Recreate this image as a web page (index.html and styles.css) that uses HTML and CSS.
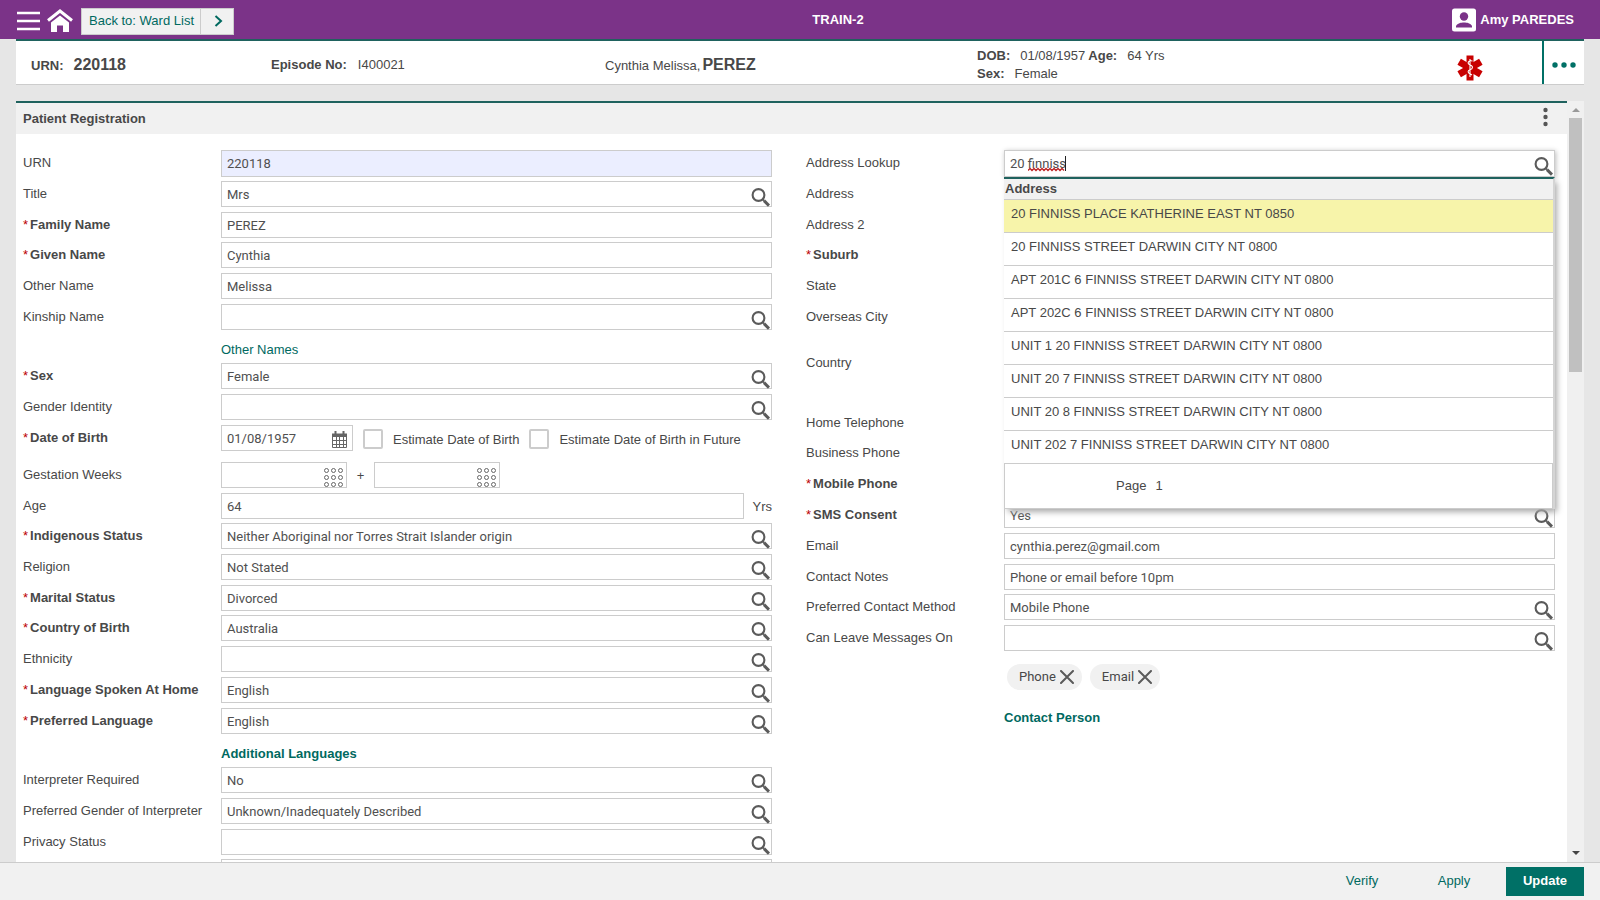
FILE: index.html
```html
<!DOCTYPE html>
<html lang="en">
<head>
<meta charset="utf-8">
<title>Patient Registration</title>
<link rel="stylesheet" href="styles.css">
</head>
<body>
<svg class="defs" aria-hidden="true">
  <symbol id="search" viewBox="0 0 19 19"><circle cx="7.5" cy="7" r="5.9" fill="none" stroke="#5b5b5b" stroke-width="2.1"/><path d="M11.6 11.2L13 12.6" stroke="#5b5b5b" stroke-width="2"/><path d="M13 12.6L18 17.6" stroke="#5b5b5b" stroke-width="3"/></symbol>
  <symbol id="keypad" viewBox="0 0 19 19"><g fill="none" stroke="#666" stroke-width="1"><circle cx="2.5" cy="2.5" r="2"/><circle cx="9.5" cy="2.5" r="2"/><circle cx="16.5" cy="2.5" r="2"/><circle cx="2.5" cy="9.5" r="2"/><circle cx="9.5" cy="9.5" r="2"/><circle cx="16.5" cy="9.5" r="2"/><circle cx="2.5" cy="16.5" r="2"/><circle cx="9.5" cy="16.5" r="2"/><circle cx="16.5" cy="16.5" r="2"/></g></symbol>
  <symbol id="close" viewBox="0 0 14 14"><path d="M1 1L13 13M13 1L1 13" stroke="#5b5b5b" stroke-width="2" stroke-linecap="round"/></symbol>
</svg>

<header class="topbar">
  <div class="topbar-left">
    <button class="icon-btn" aria-label="Menu"><svg width="24" height="20" viewBox="0 0 24 20"><path d="M1 2H24M1 10H24M1 18H24" stroke="#fff" stroke-width="2.4"/></svg></button>
    <button class="icon-btn" aria-label="Home"><svg width="26" height="24" viewBox="0 0 26 24"><path d="M1 11.5L13 2L25 11.5" fill="none" stroke="#fff" stroke-width="3"/><path d="M4 13.5L13 6.5L22 13.5V23H16V16.500H10V23H4Z" fill="#fff"/></svg></button>
    <div class="back">
      <button class="back-text">Back to: Ward List</button>
      <button class="back-next" aria-label="Next"><svg width="9" height="12" viewBox="0 0 9 12"><path d="M1.500 1L7 6L1.500 11" fill="none" stroke="#00695f" stroke-width="2"/></svg></button>
    </div>
  </div>
  <div class="site">TRAIN-2</div>
  <button class="user"><svg width="24" height="24" viewBox="0 0 24 24"><rect width="24" height="23" y="0.500" rx="2.500" fill="#fff"/><circle cx="12" cy="8.500" r="4.200" fill="#7b3388"/><path d="M4 19.500V18C5.500 15 9 14.400 12 14.400S18.500 15 20 18V19.500Z" fill="#7b3388"/></svg>Amy PAREDES</button>
</header>

<section class="banner">
  <div class="b-urn"><b>URN:</b><strong class="big">220118</strong></div>
  <div class="b-episode"><b>Episode No:</b><span>I400021</span></div>
  <div class="b-name"><span>Cynthia Melissa,</span><strong class="big">PEREZ</strong></div>
  <div class="b-dob">
    <div class="pairs"><b>DOB:</b><span>01/08/1957</span><b class="age">Age:</b><span>64 Yrs</span></div>
    <div class="pairs"><b>Sex:</b><span>Female</span></div>
  </div>
  <div class="b-alert"><svg width="26" height="26" viewBox="0 0 26 26"><g fill="#c80000"><path id="arm" d="M9.500 0.500H16.500V25.500H9.500Z"/><use href="#arm" transform="rotate(60 13 13)"/><use href="#arm" transform="rotate(120 13 13)"/></g><path d="M13 4V22M15.500 6C10.500 5 10 9 13 10C16.500 11 16 14 13 14.800C10.500 15.500 10.500 18 13 18.800L15 20" fill="none" stroke="#fff" stroke-width="1.100"/></svg></div>
  <button class="more" aria-label="More"><svg width="24" height="6" viewBox="0 0 24 6"><g fill="#007066"><circle cx="3" cy="3" r="2.700"/><circle cx="12" cy="3" r="2.700"/><circle cx="21" cy="3" r="2.700"/></g></svg></button>
</section>

<main class="work">
  <section class="panel">
    <div class="panel-head">
      <h1>Patient Registration</h1>
      <button class="options" aria-label="Options"><svg width="5" height="20" viewBox="0 0 5 20"><g fill="#555"><circle cx="2.500" cy="3" r="2.200"/><circle cx="2.500" cy="10" r="2.200"/><circle cx="2.500" cy="17" r="2.200"/></g></svg></button>
    </div>
    <form class="columns">
      <div class="column">
        <div class="row"><label for="urn">URN</label><div class="field"><input class="readonly" id="urn" value="220118" readonly></div></div>
        <div class="row"><label for="title">Title</label><div class="field"><input id="title" value="Mrs"><button type="button" class="find" aria-label="Search"><svg><use href="#search"/></svg></button></div></div>
        <div class="row tight"><label class="req" for="family">Family Name</label><div class="field"><input id="family" value="PEREZ"></div></div>
        <div class="row"><label class="req" for="given">Given Name</label><div class="field"><input id="given" value="Cynthia"></div></div>
        <div class="row"><label for="other">Other Name</label><div class="field"><input id="other" value="Melissa"></div></div>
        <div class="row"><label for="kin">Kinship Name</label><div class="field"><input id="kin"><button type="button" class="find" aria-label="Search"><svg><use href="#search"/></svg></button></div></div>
        <div class="link-row"><a href="#">Other Names</a></div>
        <div class="row"><label class="req" for="sex">Sex</label><div class="field"><input id="sex" value="Female"><button type="button" class="find" aria-label="Search"><svg><use href="#search"/></svg></button></div></div>
        <div class="row"><label for="gender">Gender Identity</label><div class="field"><input id="gender"><button type="button" class="find" aria-label="Search"><svg><use href="#search"/></svg></button></div></div>
        <div class="row birth-row"><label class="req" for="dob">Date of Birth</label>
          <div class="inline">
            <div class="field date"><input id="dob" value="01/08/1957"><button type="button" class="find calendar" aria-label="Calendar"><svg viewBox="0 0 17 18"><path d="M1 2.500H16V6H1Z" fill="#666"/><path d="M4.500 0V3M12.500 0V3" stroke="#666" stroke-width="2"/><path d="M1.500 6V16.500H15.500V6M1 9.500H16M1 13.500H16M5.500 6V17M8.500 6V17M12.500 6V17" fill="none" stroke="#666"/></svg></button></div>
            <label class="check"><input type="checkbox">Estimate Date of Birth</label>
            <label class="check"><input type="checkbox">Estimate Date of Birth in Future</label>
          </div>
        </div>
        <div class="row"><label for="weeks">Gestation Weeks</label>
          <div class="inline">
            <div class="field number"><input id="weeks"><button type="button" class="find keypad" aria-label="Keypad"><svg><use href="#keypad"/></svg></button></div>
            <span class="plus">+</span>
            <div class="field number"><input aria-label="Gestation Days"><button type="button" class="find keypad" aria-label="Keypad"><svg><use href="#keypad"/></svg></button></div>
          </div>
        </div>
        <div class="row tight"><label for="age">Age</label><div class="inline"><div class="field"><input id="age" value="64"></div><span class="unit">Yrs</span></div></div>
        <div class="row"><label class="req" for="indig">Indigenous Status</label><div class="field"><input id="indig" value="Neither Aboriginal nor Torres Strait Islander origin"><button type="button" class="find" aria-label="Search"><svg><use href="#search"/></svg></button></div></div>
        <div class="row"><label for="religion">Religion</label><div class="field"><input id="religion" value="Not Stated"><button type="button" class="find" aria-label="Search"><svg><use href="#search"/></svg></button></div></div>
        <div class="row tight"><label class="req" for="marital">Marital Status</label><div class="field"><input id="marital" value="Divorced"><button type="button" class="find" aria-label="Search"><svg><use href="#search"/></svg></button></div></div>
        <div class="row"><label class="req" for="cob">Country of Birth</label><div class="field"><input id="cob" value="Australia"><button type="button" class="find" aria-label="Search"><svg><use href="#search"/></svg></button></div></div>
        <div class="row"><label for="eth">Ethnicity</label><div class="field"><input id="eth"><button type="button" class="find" aria-label="Search"><svg><use href="#search"/></svg></button></div></div>
        <div class="row"><label class="req" for="homelang">Language Spoken At Home</label><div class="field"><input id="homelang" value="English"><button type="button" class="find" aria-label="Search"><svg><use href="#search"/></svg></button></div></div>
        <div class="row"><label class="req" for="lang">Preferred Language</label><div class="field"><input id="lang" value="English"><button type="button" class="find" aria-label="Search"><svg><use href="#search"/></svg></button></div></div>
        <div class="link-row"><a class="strong" href="#">Additional Languages</a></div>
        <div class="row"><label for="interp">Interpreter Required</label><div class="field"><input id="interp" value="No"><button type="button" class="find" aria-label="Search"><svg><use href="#search"/></svg></button></div></div>
        <div class="row"><label for="pgi">Preferred Gender of Interpreter</label><div class="field"><input id="pgi" value="Unknown/Inadequately Described"><button type="button" class="find" aria-label="Search"><svg><use href="#search"/></svg></button></div></div>
        <div class="row tight"><label for="privacy">Privacy Status</label><div class="field"><input id="privacy"><button type="button" class="find" aria-label="Search"><svg><use href="#search"/></svg></button></div></div>
        <div class="row"><span></span><div class="field"><input aria-label="Next field"></div></div>
      </div>

      <div class="column">
        <div class="row"><label for="lookup">Address Lookup</label>
          <div class="field lookup">
            <input id="lookup" value="20 finniss" spellcheck="false">
            <svg class="spell" viewBox="0 0 38 17" aria-hidden="true"><path d="M0 15.500L2 13.500L4 15.500L6 13.500L8 15.500L10 13.500L12 15.500L14 13.500L16 15.500L18 13.500L20 15.500L22 13.500L24 15.500L26 13.500L28 15.500L30 13.500L32 15.500L34 13.500L36 15.500" fill="none" stroke="#b22" stroke-width="1.300"/><path d="M37.500 1V16" stroke="#222"/></svg>
            <button type="button" class="find" aria-label="Search"><svg><use href="#search"/></svg></button>
            <div class="dropdown">
              <table>
                <thead><tr><th>Address</th></tr></thead>
                <tbody>
                  <tr class="selected"><td>20 FINNISS PLACE KATHERINE EAST NT 0850</td></tr>
                  <tr><td>20 FINNISS STREET DARWIN CITY NT 0800</td></tr>
                  <tr><td>APT 201C 6 FINNISS STREET DARWIN CITY NT 0800</td></tr>
                  <tr><td>APT 202C 6 FINNISS STREET DARWIN CITY NT 0800</td></tr>
                  <tr><td>UNIT 1 20 FINNISS STREET DARWIN CITY NT 0800</td></tr>
                  <tr><td>UNIT 20 7 FINNISS STREET DARWIN CITY NT 0800</td></tr>
                  <tr><td>UNIT 20 8 FINNISS STREET DARWIN CITY NT 0800</td></tr>
                  <tr><td>UNIT 202 7 FINNISS STREET DARWIN CITY NT 0800</td></tr>
                </tbody>
              </table>
              <div class="pager"><span>Page</span><span>1</span></div>
            </div>
          </div>
        </div>
        <div class="row"><label for="addr">Address</label><div class="field"><input id="addr"></div></div>
        <div class="row tight"><label for="addr2">Address 2</label><div class="field"><input id="addr2"></div></div>
        <div class="row"><label class="req" for="suburb">Suburb</label><div class="field"><input id="suburb"></div></div>
        <div class="row"><label for="state">State</label><div class="field"><input id="state"></div></div>
        <div class="row overseas-row"><label for="city">Overseas City</label><div class="field"><input id="city"></div></div>
        <div class="row country-row"><label for="country">Country</label><div class="field"><input id="country"></div></div>
        <div class="row tight"><label for="home">Home Telephone</label><div class="field"><input id="home"></div></div>
        <div class="row"><label for="business">Business Phone</label><div class="field"><input id="business"></div></div>
        <div class="row"><label class="req" for="mobile">Mobile Phone</label><div class="field"><input id="mobile"></div></div>
        <div class="row"><label class="req" for="sms">SMS Consent</label><div class="field"><input id="sms" value="Yes"><button type="button" class="find" aria-label="Search"><svg><use href="#search"/></svg></button></div></div>
        <div class="row"><label for="email">Email</label><div class="field"><input id="email" value="cynthia.perez@gmail.com"></div></div>
        <div class="row tight"><label for="notes">Contact Notes</label><div class="field"><input id="notes" value="Phone or email before 10pm"></div></div>
        <div class="row"><label for="method">Preferred Contact Method</label><div class="field"><input id="method" value="Mobile Phone"><button type="button" class="find" aria-label="Search"><svg><use href="#search"/></svg></button></div></div>
        <div class="row"><label for="leave">Can Leave Messages On</label><div class="field"><input id="leave"><button type="button" class="find" aria-label="Search"><svg><use href="#search"/></svg></button></div></div>
        <div class="chips">
          <span class="chip">Phone<button type="button" aria-label="Remove Phone"><svg><use href="#close"/></svg></button></span>
          <span class="chip">Email<button type="button" aria-label="Remove Email"><svg><use href="#close"/></svg></button></span>
        </div>
        <div class="link-row"><a class="strong" href="#">Contact Person</a></div>
      </div>
    </form>
  </section>
  <div class="scrollbar" aria-hidden="true">
    <span class="arrow up"></span>
    <span class="thumb"></span>
    <span class="arrow down"></span>
  </div>
</main>

<footer class="actions">
  <button>Verify</button>
  <button>Apply</button>
  <button class="primary">Update</button>
</footer>
</body>
</html>
```
FILE: styles.css
```css
* { box-sizing: border-box; }

body {
  margin: 0;
  height: 100vh;
  display: flex;
  flex-direction: column;
  overflow: hidden;
  background: #e6e6e6;
  color: #484848;
  font: 13px/16px "Liberation Sans", Arial, sans-serif;
}

button {
  margin: 0;
  padding: 0;
  border: 0;
  background: none;
  color: inherit;
  font: inherit;
  cursor: pointer;
}

svg { display: block; }
.defs { position: absolute; width: 0; height: 0; }

a { color: #00695f; text-decoration: none; }
.strong { font-weight: bold; }

/* Top bar */
.topbar {
  flex: none;
  height: 39px;
  display: grid;
  grid-template-columns: 1fr auto 1fr;
  align-items: center;
  padding: 0 26px 0 16px;
  background: #7b3388;
  color: #fff;
  font-weight: bold;
}
.topbar-left { display: flex; align-items: center; gap: 7px; padding-top: 3px; }
.site { padding-left: 86px; }
.back {
  display: flex;
  align-items: center;
  height: 27px;
  margin-left: 1px;
  border: 1px solid #ccc;
  background: #f1f1f1;
  color: #00695f;
  font-weight: normal;
}
.back-text { padding: 0 6px 0 7px; }
.back-next { height: 25px; width: 33px; padding-left: 13px; border-left: 1px solid #ccc; }
.user { display: flex; align-items: center; gap: 4px; justify-self: end; font-weight: bold; }

/* Patient banner */
.banner {
  flex: none;
  height: 46px;
  margin: 0 16px 16px;
  display: grid;
  grid-template-columns: 240fr 334fr 372fr 480fr 85px 42px;
  align-items: center;
  padding-left: 15px;
  border-top: 2px solid #1f625e;
  border-bottom: 1px solid #ccc;
  background: #fff;
}
.big { font-size: 16px; }
.b-urn { display: flex; align-items: baseline; gap: 10px; padding-top: 5px; }
.b-episode { display: flex; gap: 11px; padding-top: 5px; }
.b-name { display: flex; align-items: baseline; gap: 2px; padding-top: 5px; }
.b-dob { padding-top: 5px; line-height: 18px; }
.pairs { display: flex; gap: 10px; }
.age { margin-left: -7px; }
.b-alert { padding-top: 10px; }
.more {
  align-self: stretch;
  display: flex;
  align-items: center;
  justify-content: center;
  padding-top: 5px;
  border-left: 2px solid #007066;
}

/* Working area */
.work { flex: 1; min-height: 0; display: flex; margin: 0 16px; }
.panel { flex: 1; overflow: hidden; border-top: 2px solid #1f625e; background: #fff; }
.panel-head {
  height: 31px;
  display: flex;
  align-items: center;
  justify-content: space-between;
  padding: 0 19px 0 7px;
  background: #f1f1f1;
}
.panel-head h1 { margin: 0; font-size: 13px; }
.options { padding-bottom: 3px; }

.columns {
  display: grid;
  grid-template-columns: 1fr 1fr;
  gap: 34px;
  padding: 16px 12px 0 7px;
}
.row {
  display: grid;
  grid-template-columns: 198px 1fr;
  align-items: start;
  height: 31px;
  line-height: 26px;
}
.tight { height: 30px; }
.birth-row { height: 37px; }
.overseas-row { height: 46px; }
.country-row { height: 60px; }
.req { font-weight: bold; }
.req::before { content: "*"; margin-right: 2px; color: #b00; font-weight: normal; }
.link-row { height: 28px; padding-left: 198px; line-height: 30px; }

.field { position: relative; flex: 1; min-width: 0; }
.field input {
  display: block;
  width: 100%;
  height: 26px;
  padding: 0 5px;
  border: 1px solid #ccc;
  border-radius: 0;
  outline: 0;
  background: #fff;
  color: #505050;
  font: 13px Roboto, sans-serif;
}
.field .readonly { height: 27px; background: #ebeeff; }
.find { position: absolute; top: 7px; right: 2px; }
.find svg { width: 19px; height: 19px; }

.inline { display: flex; align-items: flex-start; }
.date { flex: none; width: 132px; }
.date .calendar { top: 6px; right: 5px; }
.calendar svg { width: 17px; height: 18px; }
.check { display: flex; gap: 10px; margin-left: 10px; padding-top: 4px; line-height: 22px; }
.check input {
  appearance: none;
  width: 20px;
  height: 20px;
  margin: 0;
  border: 2px solid #ccc;
  border-radius: 2px;
  background: #fff;
}
.number { flex: none; width: 126px; }
.number .keypad { top: 6px; right: 4px; }
.plus { width: 27px; text-align: center; line-height: 28px; }
.unit { padding-left: 9px; line-height: 28px; }

/* Address lookup */
.lookup input { height: 27px; box-shadow: 1px 1px 5px #bbb; }
.spell { position: absolute; top: 5px; left: 24px; width: 38px; height: 17px; }
.dropdown {
  position: absolute;
  z-index: 2;
  top: 27px;
  left: 0;
  right: 0;
  border-top: 2px solid #1f625e;
  border-right: 2px solid #d4d4d4;
  background: #fff;
  box-shadow: 3px 4px 6px -1px #aaa;
  line-height: 18px;
}
.dropdown table { width: 100%; border-collapse: collapse; }
.dropdown th { height: 20px; padding: 0 1px; background: #f1f1f1; text-align: left; }
.dropdown td { height: 33px; padding: 0 7px 3px; }
.dropdown tr { border-bottom: 1px solid #ccc; }
.selected { background: #f7f4aa; }
.pager {
  height: 45px;
  display: flex;
  gap: 9px;
  padding-left: 111px;
  border: 1px solid #ccc;
  border-top: 0;
  line-height: 43px;
}

.chips { display: flex; gap: 8px; padding: 8px 0 0 201px; margin-bottom: 13px; }
.chip {
  display: flex;
  align-items: center;
  gap: 4px;
  height: 26px;
  padding: 0 8px 0 12px;
  border-radius: 13px;
  background: #f1f1f1;
  font-family: Roboto, sans-serif;
}
.chip svg { width: 14px; height: 14px; }

/* Scrollbar */
.scrollbar {
  width: 17px;
  display: flex;
  flex-direction: column;
  align-items: center;
  padding: 7px 0;
  background: #f0f0f0;
}
.arrow { border: 4px solid transparent; }
.up { margin-bottom: 6px; border-top: 0; border-bottom-color: #999; }
.thumb { width: 13px; height: 254px; background: #c0c0c0; }
.down { margin-top: auto; border-bottom: 0; border-top-color: #444; }

/* Actions */
.actions {
  flex: none;
  height: 38px;
  display: flex;
  justify-content: flex-end;
  padding: 4px 16px;
  border-top: 1px solid #ccc;
  background: #f1f1f1;
  color: #00695f;
}
.actions button { width: 92px; height: 29px; line-height: 27px; padding-bottom: 2px; }
.actions .primary { width: 78px; margin-left: 6px; background: #007066; color: #fff; font-weight: bold; }
```
